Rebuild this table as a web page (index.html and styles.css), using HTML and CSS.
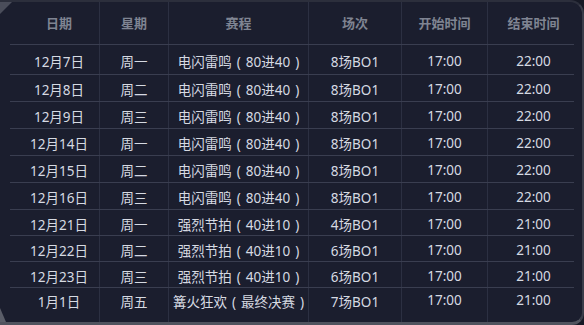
FILE: index.html
```html
<!DOCTYPE html>
<html lang="zh">
<head>
<meta charset="utf-8">
<link rel="stylesheet" href="styles.css">
</head>
<body>
<div class="panel">
  <div class="table">
    <div class="row head">
      <div class="c c1">日期</div><div class="c c2">星期</div><div class="c c3">赛程</div><div class="c c4">场次</div><div class="c c5">开始时间</div><div class="c c6">结束时间</div>
    </div>
    <div class="row r30">
      <div class="c c1">12月7日</div><div class="c c2">周一</div><div class="c c3">电闪雷鸣 ( 80进40 )</div><div class="c c4">8场BO1</div><div class="c c5">17:00</div><div class="c c6">22:00</div>
    </div>
    <div class="row r27">
      <div class="c c1">12月8日</div><div class="c c2">周二</div><div class="c c3">电闪雷鸣 ( 80进40 )</div><div class="c c4">8场BO1</div><div class="c c5">17:00</div><div class="c c6">22:00</div>
    </div>
    <div class="row r27">
      <div class="c c1">12月9日</div><div class="c c2">周三</div><div class="c c3">电闪雷鸣 ( 80进40 )</div><div class="c c4">8场BO1</div><div class="c c5">17:00</div><div class="c c6">22:00</div>
    </div>
    <div class="row r27">
      <div class="c c1">12月14日</div><div class="c c2">周一</div><div class="c c3">电闪雷鸣 ( 80进40 )</div><div class="c c4">8场BO1</div><div class="c c5">17:00</div><div class="c c6">22:00</div>
    </div>
    <div class="row r27">
      <div class="c c1">12月15日</div><div class="c c2">周二</div><div class="c c3">电闪雷鸣 ( 80进40 )</div><div class="c c4">8场BO1</div><div class="c c5">17:00</div><div class="c c6">22:00</div>
    </div>
    <div class="row r27">
      <div class="c c1">12月16日</div><div class="c c2">周三</div><div class="c c3">电闪雷鸣 ( 80进40 )</div><div class="c c4">8场BO1</div><div class="c c5">17:00</div><div class="c c6">22:00</div>
    </div>
    <div class="row r26">
      <div class="c c1">12月21日</div><div class="c c2">周一</div><div class="c c3">强烈节拍 ( 40进10 )</div><div class="c c4">4场BO1</div><div class="c c5">17:00</div><div class="c c6">21:00</div>
    </div>
    <div class="row r26">
      <div class="c c1">12月22日</div><div class="c c2">周二</div><div class="c c3">强烈节拍 ( 40进10 )</div><div class="c c4">6场BO1</div><div class="c c5">17:00</div><div class="c c6">21:00</div>
    </div>
    <div class="row r26">
      <div class="c c1">12月23日</div><div class="c c2">周三</div><div class="c c3">强烈节拍 ( 40进10 )</div><div class="c c4">6场BO1</div><div class="c c5">17:00</div><div class="c c6">21:00</div>
    </div>
    <div class="row last">
      <div class="c c1">1月1日</div><div class="c c2">周五</div><div class="c c3">篝火狂欢 ( 最终决赛 )</div><div class="c c4">7场BO1</div><div class="c c5">17:00</div><div class="c c6">21:00</div>
    </div>
  </div>
</div>
</body>
</html>
```
FILE: styles.css
```css
html, body {
  margin: 0;
  padding: 0;
  background: #161925;
}
.panel {
  position: relative;
  width: 584px;
  height: 325px;
  box-sizing: border-box;
  background: #1b1e2e;
  border-top: 2px solid #2c2f3c;
  border-bottom: 3px solid #50535e;
  border-right: 2px solid #3a3d4a;
  border-radius: 0 14px 12px 0;
  overflow: hidden;
  font-family: "Noto Sans", "Noto Sans CJK SC", sans-serif;
}
.panel::before {
  content: "";
  position: absolute;
  left: 0;
  top: 0;
  width: 0;
  height: 0;
  border-top: 12px solid #4a4d5a;
  border-right: 12px solid transparent;
}
.panel::after {
  content: "";
  position: absolute;
  left: 0;
  bottom: 0;
  width: 0;
  height: 0;
  border-bottom: 14px solid #5a5d68;
  border-right: 6px solid transparent;
}
.table {
  margin-left: 10px;
  width: 564px;
  margin-top: -2px;
}
.row {
  display: grid;
  grid-template-columns: 89px 69px 140px 93px 86px 87px;
  border-bottom: 1px solid #3a3e50;
  box-sizing: border-box;
}
.row.last {
  border-bottom: none;
  height: 40px;
}
.c {
  display: flex;
  align-items: center;
  justify-content: center;
  font-size: 13.5px;
  color: #d6dae2;
  white-space: nowrap;
  padding-top: 2px;
  box-sizing: border-box;
}
.c3 {
  word-spacing: 1.5px;
}
.c + .c {
  border-left: 1px solid #2c3042;
}
.row.last .c {
  align-items: flex-start;
  padding-top: 3px;
}
.c1 { padding-left: 9px; }
.c6 { padding-left: 5px; }
.head {
  height: 45px;
}
.head .c {
  color: #7f8492;
  font-weight: bold;
  font-size: 13px;
  padding-top: 0;
}
.r30 { height: 30px; }
.r27 { height: 27px; }
.r26 { height: 26px; }
```
